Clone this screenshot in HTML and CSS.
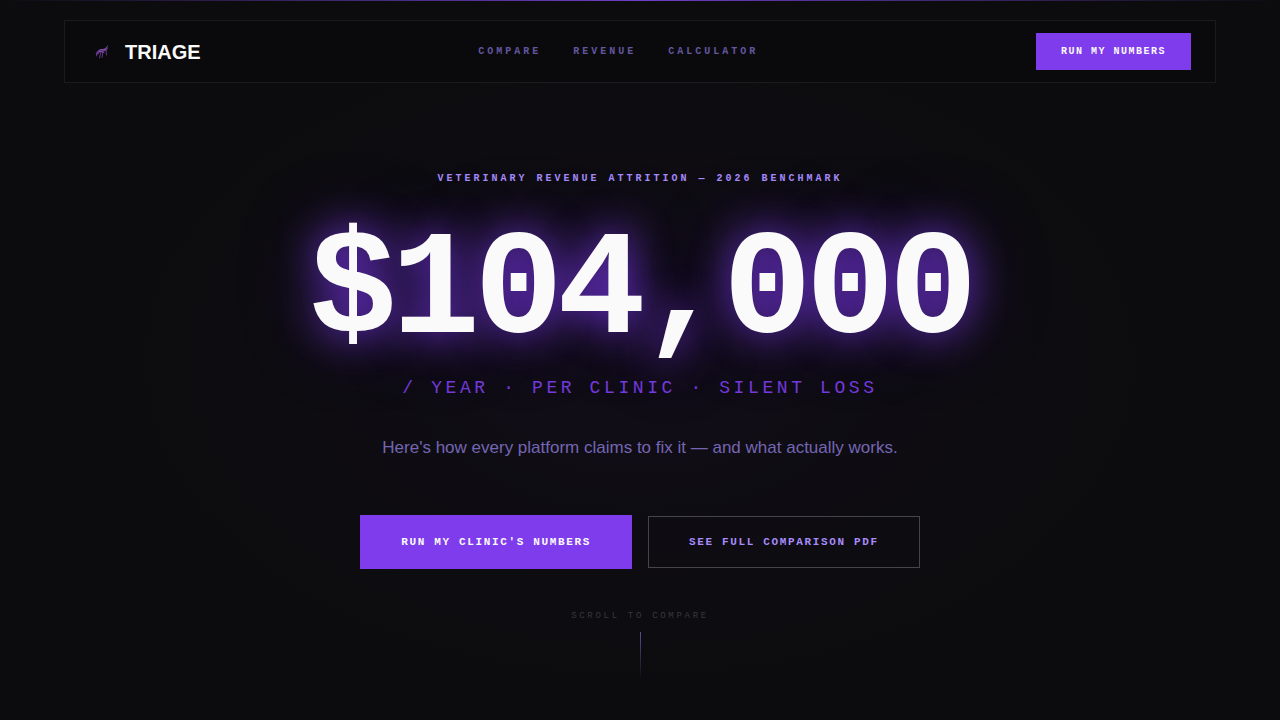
FILE: index.html
```html
<!DOCTYPE html>
<html lang="en">
<head>
    <meta charset="UTF-8">
    <meta name="viewport" content="width=device-width, initial-scale=1.0">
    <title>Triage</title>
    <link rel="stylesheet" href="styles.css">
</head>
<body>
    <div class="top-line"></div>

    <header class="nav">
        <a class="brand" href="#">
            <svg class="brand-icon" viewBox="0 0 24 24" fill="none" stroke-linecap="round" aria-hidden="true">
                <path d="M8 13.500 L11 10.500 L14 10.500 L17.500 8.500" stroke="#63358c" stroke-width="2.500"/>
                <path d="M9 12 L7.300 16 M12 12 L10.500 18 M14 12 L13 17.500 M17 10 L17.500 15" stroke="#5c3488" stroke-width="1"/>
                <path d="M10 11 L15 12.500 M12 9.500 L17 10 M17.500 8 L18.500 6" stroke="#9a66b8" stroke-width="0.700"/>
            </svg>
            <span class="brand-name">TRIAGE</span>
        </a>
        <nav class="nav-links">
            <a href="#compare">COMPARE</a>
            <a href="#revenue">REVENUE</a>
            <a href="#calculator">CALCULATOR</a>
        </nav>
        <button class="nav-cta" type="button">RUN MY NUMBERS</button>
    </header>

    <main class="hero">
        <p class="eyebrow">VETERINARY REVENUE ATTRITION — 2026 BENCHMARK</p>
        <h1 class="amount">$104,000</h1>
        <p class="unit">/ YEAR · PER CLINIC · SILENT LOSS</p>
        <p class="lead">Here's how every platform claims to fix it — and what actually works.</p>
        <div class="actions">
            <button class="btn btn-primary" type="button">RUN MY CLINIC'S NUMBERS</button>
            <button class="btn btn-outline" type="button">SEE FULL COMPARISON PDF</button>
        </div>
        <div class="scroll-hint">
            <span>SCROLL TO COMPARE</span>
            <div class="scroll-line"></div>
        </div>
    </main>
</body>
</html>
```
FILE: styles.css
```css
* {
    box-sizing: border-box;
    margin: 0;
    padding: 0;
}

body {
    min-height: 100vh;
    background: radial-gradient(ellipse 40% 45% at 50% 50%, #110d18 0%, #0c0c0e 100%) #0c0c0e;
    color: #fafafa;
    font-family: "Liberation Sans", Arial, sans-serif;
    overflow-x: hidden;
}

a {
    text-decoration: none;
}

button {
    font-family: "Liberation Mono", "Courier New", monospace;
    font-weight: 700;
    letter-spacing: 0.15em;
    cursor: pointer;
}

.top-line {
    height: 1px;
    background: linear-gradient(90deg, transparent, #6d3fc8, transparent);
}

/* Navigation */
.nav {
    display: flex;
    justify-content: space-between;
    align-items: center;
    margin: 19px 5% 0;
    padding: 12px 24px;
    border: 1px solid #1b1b1e;
    background: #0a0a0c;
}

.brand {
    display: flex;
    align-items: center;
    gap: 12px;
    color: #fafafa;
}

.brand-icon {
    width: 24px;
    height: 24px;
}

.brand-name {
    font-size: 20px;
    font-weight: 700;
    line-height: 24px;
}

.nav-links {
    display: flex;
    gap: 32px;
    font-family: "Liberation Mono", "Courier New", monospace;
    font-size: 10px;
    font-weight: 700;
    letter-spacing: 0.3em;
}

.nav-links a {
    color: #6357a0;
}

.nav-cta {
    padding: 12px 24px;
    border: 1px solid #7f3cec;
    background: #7f3cec;
    color: #fafafa;
    font-size: 10px;
}

/* Hero */
.hero {
    display: flex;
    flex-direction: column;
    align-items: center;
    padding: 89px 24px 40px;
    text-align: center;
}

.eyebrow,
.amount,
.unit,
.scroll-hint {
    font-family: "Liberation Mono", "Courier New", monospace;
}

.eyebrow {
    color: #a78bfa;
    font-size: 10px;
    font-weight: 700;
    line-height: 14px;
    letter-spacing: 0.3em;
}

.amount {
    margin-top: 39px;
    font-size: 148px;
    font-weight: 700;
    line-height: 136px;
    letter-spacing: -0.04em;
    text-shadow: 0 0 40px rgba(124, 58, 237, 0.9), 0 0 80px rgba(76, 29, 149, 0.4);
}

.unit {
    margin-top: 17px;
    color: #7339dc;
    font-size: 18px;
    line-height: 20px;
    letter-spacing: 0.2em;
}

.lead {
    margin-top: 36px;
    color: #7466b2;
    font-size: 17px;
    line-height: 28px;
}

.actions {
    display: flex;
    flex-wrap: wrap;
    justify-content: center;
    align-items: center;
    gap: 16px;
    margin-top: 53px;
}

.btn {
    padding: 19px 40px;
    border: 1px solid #44444a;
    font-size: 11px;
    line-height: 12px;
}

.btn-primary {
    padding: 20px 40px;
    border-color: #7f3cec;
    background: #7f3cec;
    color: #fafafa;
}

.btn-outline {
    background: transparent;
    color: #a78bfa;
}

.scroll-hint {
    display: flex;
    flex-direction: column;
    align-items: center;
    gap: 10px;
    margin-top: 41px;
    color: #38383e;
    font-size: 9px;
    line-height: 12px;
    letter-spacing: 0.3em;
}

.scroll-line {
    width: 1px;
    height: 48px;
    background: linear-gradient(180deg, #5b4b9a, transparent);
}
```
